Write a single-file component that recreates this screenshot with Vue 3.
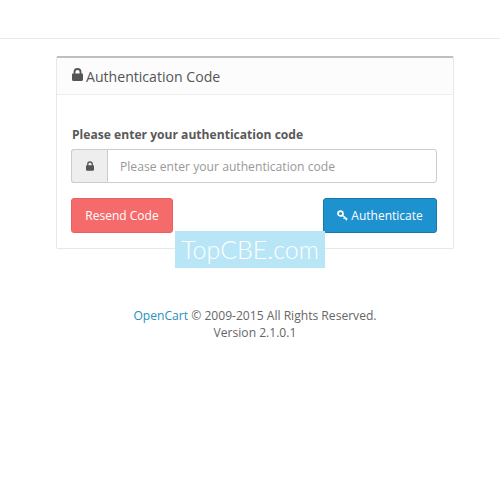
<script setup>
const year = '2009-2015'
</script>

<template>
  <div class="page">
    <header class="top"></header>
    <div class="container">
      <section class="panel">
        <div class="panel-heading">
          <svg class="title-lock" viewBox="0 0 12 14" width="11" height="13">
            <path d="M1.200 6h.5V4.200a4.300 4.200 0 0 1 8.600 0V6h.5c.6 0 1.200.5 1.200 1.100v5.700c0 .7-.6 1.200-1.200 1.200H1.200C.6 14 0 13.500 0 12.800V7.100C0 6.500.6 6 1.200 6zM3.700 6h4.600V4.200a2.300 2.200 0 0 0-4.600 0z" fill="#555" fill-rule="evenodd" />
          </svg>
          <h1>Authentication Code</h1>
        </div>
        <form class="panel-body" @submit.prevent>
          <label for="code">Please enter your authentication code</label>
          <div class="input-group">
            <span class="addon">
              <svg viewBox="0 0 12 14" width="8" height="10">
                <path d="M1.200 6h.5V4.200a4.300 4.200 0 0 1 8.600 0V6h.5c.6 0 1.200.5 1.200 1.100v5.700c0 .7-.6 1.200-1.200 1.200H1.200C.6 14 0 13.500 0 12.800V7.100C0 6.500.6 6 1.200 6zM3.700 6h4.600V4.200a2.300 2.200 0 0 0-4.600 0z" fill="#555" fill-rule="evenodd" />
              </svg>
            </span>
            <input id="code" type="text" placeholder="Please enter your authentication code" />
          </div>
          <div class="actions">
            <button type="button" class="btn btn-danger">Resend Code</button>
            <button type="submit" class="btn btn-primary">
              <svg viewBox="0 0 12 12" width="11" height="11">
                <circle cx="3.800" cy="3.800" r="2.700" fill="none" stroke="#fff" stroke-width="1.900" />
                <path d="M5.800 5.800l5.400 4.400M8.600 8l-1.300 1.700M10.700 9.700l-1.100 1.500" fill="none" stroke="#fff" stroke-width="1.500" />
              </svg>
              Authenticate
            </button>
          </div>
        </form>
      </section>
      <div class="watermark">TopCBE.com</div>
      <footer class="foot">
        <a href="#">OpenCart</a> © {{ year }} All Rights Reserved.<br />
        Version 2.1.0.1
      </footer>
    </div>
  </div>
</template>

<style scoped>
.page {
  height: 500px;
  background: #fff;
  font-family: 'Open Sans', sans-serif;
  font-size: 12px;
  color: #666;
  overflow: hidden;
}
.top {
  height: 38px;
  border-bottom: 1px solid #e9e9e9;
  background: #fff;
}
.container {
  position: relative;
  padding: 17px 46px 0 56px;
}
.panel {
  border: 1px solid #e8e8e8;
  border-top: 2px solid #bfbfbf;
  border-radius: 2px;
  height: 193px;
  box-sizing: border-box;
}
.panel-heading {
  display: flex;
  align-items: center;
  gap: 3px;
  height: 36px;
  padding: 0 15px;
  background: #fcfcfc;
  border-bottom: 1px solid #eee;
}
.panel-heading h1 {
  margin: 1px 0 0;
  font-size: 14.100px;
  font-weight: 400;
  line-height: 36px;
  color: #555;
}
.title-lock {
  margin-top: -3px;
}
.panel-body {
  padding: 31px 16px 0 14px;
}
label {
  display: block;
  padding-left: 1px;
  font-size: 12.100px;
  font-weight: 700;
  line-height: 18px;
  color: #595959;
  margin-bottom: 5px;
}
.input-group {
  display: flex;
  height: 34px;
}
.addon {
  display: flex;
  align-items: center;
  justify-content: center;
  width: 36px;
  flex: none;
  box-sizing: border-box;
  background: #eee;
  border: 1px solid #ccc;
  border-right: 0;
  border-radius: 3px 0 0 3px;
}
input {
  flex: 1;
  min-width: 0;
  box-sizing: border-box;
  height: 34px;
  padding: 0 12px;
  border: 1px solid #ccc;
  border-radius: 0 3px 3px 0;
  font-family: inherit;
  font-size: 12.150px;
  color: #555;
  outline: none;
}
input::placeholder {
  color: #999;
  opacity: 1;
}
.actions {
  display: flex;
  justify-content: space-between;
  margin-top: 15px;
}
.btn {
  height: 35px;
  box-sizing: border-box;
  border-radius: 3px;
  font-family: inherit;
  font-size: 12px;
  color: #fff;
  cursor: pointer;
}
.btn-danger {
  width: 102px;
  background: #f56b6b;
  border: 1px solid #e86060;
}
.btn-primary {
  width: 114px;
  background: #1e91cf;
  border: 1px solid #1978ab;
}
.btn-primary svg {
  vertical-align: -1px;
}
.watermark {
  position: absolute;
  left: 175px;
  top: 192px;
  width: 150px;
  height: 37px;
  background: #b9e6f6;
  color: #fff;
  font-family: 'Lato', sans-serif;
  font-size: 25px;
  font-weight: 300;
  line-height: 37px;
  text-align: center;
}
.foot {
  margin: 58px 0 0;
  text-align: center;
  font-size: 12.100px;
  line-height: 17px;
  color: #666;
}
.foot a {
  color: #2a8fbd;
  text-decoration: none;
}
</style>
